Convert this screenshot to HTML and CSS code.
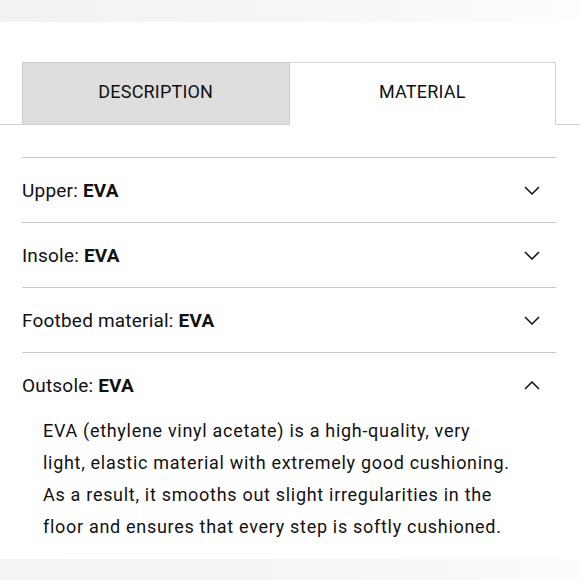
FILE: index.html
```html
<!DOCTYPE html>
<html lang="en">
<head>
<meta charset="utf-8">
<link rel="stylesheet" href="styles.css">
</head>
<body>
<div class="band top"></div>
<div class="tabs">
  <div class="tab inactive">DESCRIPTION</div>
  <div class="tab active">MATERIAL</div>
</div>
<ul class="list">
  <li class="row">
    <div class="head"><span>Upper: <b>EVA</b></span>
      <svg class="chev" viewBox="0 0 16 9" width="16" height="9"><path d="M1 1 L8 8 L15 1" fill="none" stroke="#111" stroke-width="1.5"/></svg></div>
  </li>
  <li class="row">
    <div class="head"><span>Insole: <b>EVA</b></span>
      <svg class="chev" viewBox="0 0 16 9" width="16" height="9"><path d="M1 1 L8 8 L15 1" fill="none" stroke="#111" stroke-width="1.5"/></svg></div>
  </li>
  <li class="row">
    <div class="head"><span>Footbed material: <b>EVA</b></span>
      <svg class="chev" viewBox="0 0 16 9" width="16" height="9"><path d="M1 1 L8 8 L15 1" fill="none" stroke="#111" stroke-width="1.5"/></svg></div>
  </li>
  <li class="row open">
    <div class="head"><span>Outsole: <b>EVA</b></span>
      <svg class="chev" viewBox="0 0 16 9" width="16" height="9"><path d="M1 8 L8 1 L15 8" fill="none" stroke="#111" stroke-width="1.5"/></svg></div>
    <p class="body">EVA (ethylene vinyl acetate) is a high-quality, very<br>light, elastic material with extremely good cushioning.<br>As a result, it smooths out slight irregularities in the<br>floor and ensures that every step is softly cushioned.</p>
  </li>
</ul>
<div class="band bottom"></div>
</body>
</html>
```
FILE: styles.css
```css
html, body {
  margin: 0;
  padding: 0;
  background: #fff;
}
body {
  width: 580px;
  height: 580px;
  overflow: hidden;
  font-family: Roboto, "Liberation Sans", sans-serif;
  color: #111;
}
.band {
  height: 22px;
  background: linear-gradient(90deg, #f2f2f2 0%, #f6f6f6 50%, #fdfdfd 100%);
}
.band.bottom {
  height: 24px;
  background: linear-gradient(90deg, #f4f4f4 0%, #f6f6f6 60%, #fcfcfc 100%);
}
.tabs {
  display: flex;
  margin-top: 40px;
  padding: 0 24px 0 22px;
  border-bottom: 1px solid #cfcfcf;
  height: 62px;
}
.tab {
  flex: 1;
  display: flex;
  align-items: center;
  justify-content: center;
  font-size: 18px;
  letter-spacing: 0.2px;
  box-sizing: border-box;
  padding-bottom: 5px;
}
.tab.inactive {
  background: #dedede;
  border: 1px solid #cccccc;
  border-bottom: none;
}
.tab.active {
  background: #fff;
  border: 1px solid #d4d4d4;
  border-left: none;
  border-bottom: none;
  height: 63px;
  padding-bottom: 6px;
}
.list {
  list-style: none;
  margin: 32px 24px 0 22px;
  padding: 0;
}
.row {
  border-top: 1px solid #c8c8c8;
}
.head {
  height: 64px;
  display: flex;
  align-items: center;
  justify-content: space-between;
  font-size: 19px;
  letter-spacing: 0.2px;
}
.head b {
  font-weight: 700;
}
.chev {
  margin-right: 16px;
}
.body {
  margin: -2px 0 0;
  padding: 0 0 16px 21px;
  font-size: 18px;
  letter-spacing: 0.7px;
  line-height: 32px;
  white-space: nowrap;
}
```
